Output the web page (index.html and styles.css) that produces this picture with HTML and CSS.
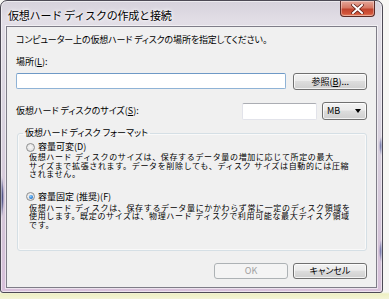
FILE: index.html
```html
<!DOCTYPE html>
<html lang="ja">
<head>
<meta charset="utf-8">
<title>仮想ハード ディスクの作成と接続</title>
<link rel="stylesheet" href="styles.css">
</head>
<body>
<div class="window">
  <div class="titlebar">
    <span class="title">仮想ハード ディスクの作成と接続</span>
    <div class="close">
      <svg width="13" height="10" viewBox="0 0 13 10"><path d="M2 1 L11 9 M11 1 L2 9" stroke="#5a1a14" stroke-width="3.4" stroke-linecap="square"/><path d="M2 1 L11 9 M11 1 L2 9" stroke="#ffffff" stroke-width="2" stroke-linecap="square"/></svg>
    </div>
  </div>
  <div class="client">
    <p class="intro">コンピューター上の仮想ハード ディスクの場所を指定してください。</p>
    <p class="lbl lbl-loc">場所(<u>L</u>):</p>
    <div class="row row-loc">
      <div class="field field-loc"></div>
      <div class="btn btn-browse">参照(<u>B</u>)...</div>
    </div>
    <div class="row row-size">
      <span class="lbl lbl-size">仮想ハード ディスクのサイズ(<u>S</u>):</span>
      <div class="field field-size"></div>
      <div class="combo"><span>MB</span><span class="arrow"></span></div>
    </div>
    <fieldset class="group">
      <legend>仮想ハード ディスク&nbsp;フォーマット</legend>
      <div class="opt opt-1"><span class="radio"></span><span>容量可変(D)</span></div>
      <div class="desc desc-1">
        <p>仮想ハード ディスクのサイズは、保存するデータ量の増加に応じて所定の最大</p>
        <p>サイズまで拡張されます。データを削除しても、ディスク サイズは自動的には圧縮</p>
        <p>されません。</p>
      </div>
      <div class="opt opt-2"><span class="radio checked"></span><span>容量固定 (推奨)(F)</span></div>
      <div class="desc desc-2">
        <p>仮想ハード ディスクは、保存するデータ量にかかわらず常に一定のディスク領域を</p>
        <p>使用します。既定のサイズは、物理ハード ディスクで利用可能な最大ディスク領域</p>
        <p>です。</p>
      </div>
    </fieldset>
    <div class="actions">
      <div class="btn btn-ok disabled">OK</div>
      <div class="btn btn-cancel">キャンセル</div>
    </div>
  </div>
</div>
</body>
</html>
```
FILE: styles.css
```css
* { box-sizing: border-box; }
html, body { margin: 0; padding: 0; }
body {
  width: 389px;
  height: 299px;
  background: linear-gradient(180deg, #f7f7f4 0, #f7f7f4 292px, #eef0c4 294px, #f3f4d6 299px);
  font-family: "Noto Sans CJK JP", "Noto Sans", sans-serif;
  color: #000;
  overflow: hidden;
}
.window {
  width: 383px;
  height: 293px;
  border: 1px solid #4d4a55;
  border-radius: 7px 7px 3px 3px;
  padding: 0 5px 4px 5px;
  display: flex;
  flex-direction: column;
  background:
    radial-gradient(3px 22px at 0px 196px, #1b2466 0, rgba(27,36,102,.7) 50%, rgba(27,36,102,0) 100%),
    radial-gradient(3px 10px at 100% 145px, #2a3880 0, rgba(42,56,128,0) 100%),
    radial-gradient(3px 12px at 100% 250px, #2a3880 0, rgba(42,56,128,0) 100%),
    linear-gradient(180deg, #d6d2dc 0, #e2dee6 20px, #d9d3df 120px, #d4c3d8 240px, #d8c0da 293px);
  box-shadow: inset 0 0 0 1px rgba(255,255,255,.55);
}
.titlebar {
  height: 25px;
  display: flex;
  align-items: flex-start;
  padding-left: 2px;
}
.title {
  font-size: 11px;
  line-height: 12px;
  margin-top: 8px;
  letter-spacing: -0.2px;
  text-shadow: 0 0 5px #fff, 0 0 3px #fff;
}
.close {
  margin-left: auto;
  margin-right: 2px;
  width: 35px;
  height: 16px;
  border: 1px solid #5b2a26;
  border-top: none;
  border-radius: 0 0 4px 4px;
  background: linear-gradient(180deg, #e4a79a 0, #d67864 45%, #c0442e 55%, #d3553a 85%, #e48a6c 100%);
  box-shadow: inset 0 0 0 1px rgba(255,255,255,.35);
  display: flex;
  align-items: center;
  justify-content: center;
}
.close svg { display: block; }
.client {
  flex: 1;
  background: #f0f0f0;
  border: 1px solid #7f7d88;
  box-shadow: 0 0 0 1px rgba(255,255,255,.55);
  padding: 7px 9px 8px 9px;
  display: flex;
  flex-direction: column;
  font-size: 9px;
  line-height: 12px;
  font-feature-settings: "palt";
}
p { margin: 0; }
u { text-decoration: underline; text-underline-offset: 1px; }
.intro { letter-spacing: -0.15px; }
.lbl-loc { margin-top: 10px; }
.row { display: flex; align-items: flex-start; }
.row-loc { margin-top: 5px; gap: 7px; }
.field {
  height: 16px;
  background: #fff;
  border: 1px solid #e2e3ea;
  border-top-color: #abadb3;
  border-radius: 2px;
}
.field-loc {
  width: 272px;
  border-color: #8fb3d6;
  border-top-color: #6e99c6;
}
.btn {
  height: 17px;
  width: 74px;
  border: 1px solid #707070;
  border-radius: 3px;
  background: linear-gradient(180deg, #f2f2f2 0, #ebebeb 45%, #dddddd 50%, #cfcfcf 100%);
  box-shadow: inset 0 0 0 1px rgba(255,255,255,.75);
  display: flex;
  align-items: center;
  justify-content: center;
  line-height: 12px;
}
.row-size { margin-top: 12px; align-items: center; gap: 5px; }
.lbl-size { flex: 1; align-self: center; }
.field-size { width: 75px; height: 17px; }
.combo {
  width: 45px;
  height: 18px;
  border: 1px solid #707070;
  border-radius: 3px;
  background: linear-gradient(180deg, #f2f2f2 0, #ebebeb 45%, #dddddd 50%, #cfcfcf 100%);
  box-shadow: inset 0 0 0 1px rgba(255,255,255,.75);
  display: flex;
  align-items: center;
  padding: 0 5px 0 4px;
  justify-content: space-between;
}
.arrow {
  width: 0;
  height: 0;
  border-left: 3.5px solid transparent;
  border-right: 3.5px solid transparent;
  border-top: 4px solid #000;
}
.group {
  margin: 7px 0 0 1px;
  padding: 0 0 20px 0;
  border: 1px solid #d5dfe5;
  border-radius: 3px;
  box-shadow: inset 0 0 0 1px rgba(255,255,255,.6);
  min-width: 0;
}
.group legend {
  padding: 0 2px;
  margin-left: 5px;
  line-height: 12px;
  font-size: 9px;
}
.opt {
  display: flex;
  align-items: center;
  height: 12px;
  gap: 2px;
  padding-left: 8px;
}
.opt-1 { margin-top: 2px; }
.opt-2 { margin-top: 11px; }
.radio {
  width: 9px;
  height: 9px;
  border-radius: 50%;
  border: 1px solid #8f9090;
  background: radial-gradient(circle at 50% 45%, #f7f7f7 0, #e6e6e6 60%, #d0d0d0 100%);
  position: relative;
  margin-right: 1px;
}
.radio.checked::after {
  content: "";
  position: absolute;
  left: 1.5px;
  top: 1.5px;
  width: 4px;
  height: 4px;
  border-radius: 50%;
  background: radial-gradient(circle at 40% 35%, #8fd0ff 0, #2b7fd6 60%, #12449a 100%);
}
.desc {
  padding-left: 11px;
  font-family: "Liberation Sans", "Noto Sans CJK JP", sans-serif;
  line-height: 8.5px;
  font-size: 8px;
  font-feature-settings: normal;
  letter-spacing: 0.65px;
  margin-top: 1px;
  white-space: nowrap;
}
.desc p { height: 8.5px; }
.desc-2 { margin-top: 2px; }
.actions {
  margin-top: auto;
  display: flex;
  justify-content: flex-end;
  gap: 5px;
}
.actions .btn { height: 16px; }
.btn.disabled {
  border-color: #adb2b5;
  background: #f4f4f4;
  box-shadow: none;
  color: #a0a0a0;
}
```
